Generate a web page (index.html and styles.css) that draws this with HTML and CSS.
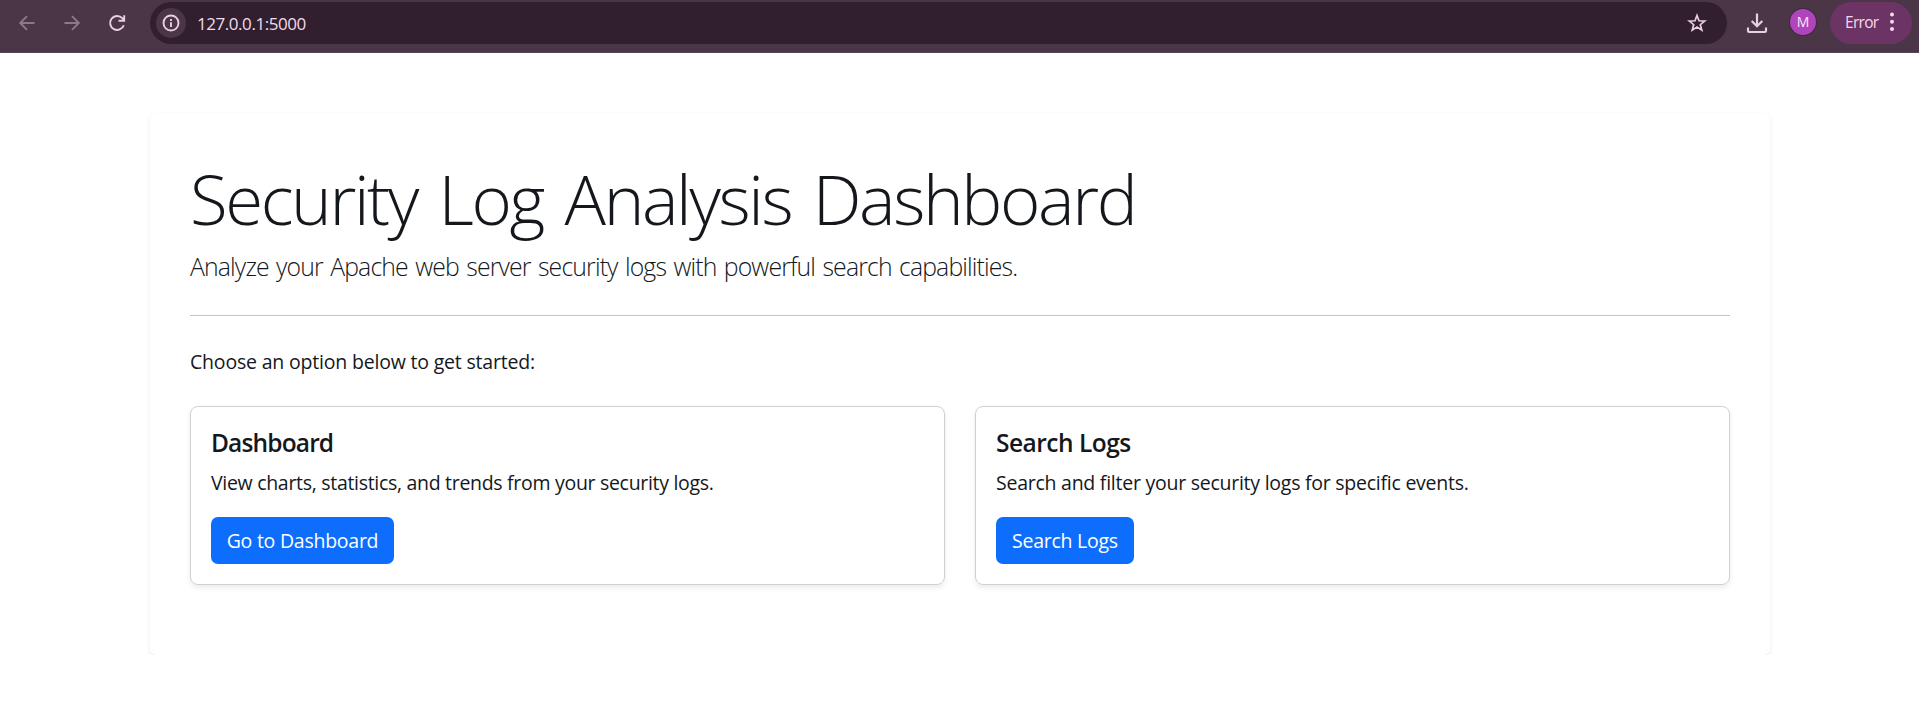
FILE: index.html
```html
<!DOCTYPE html>
<html lang="en">
<head>
<meta charset="utf-8">
<title>Security Log Analysis Dashboard</title>
<link rel="stylesheet" href="styles.css">
</head>
<body>
<header class="toolbar">
  <nav class="nav">
    <svg class="icon dim" viewBox="0 0 20 20"><path d="M17.5 10H3.5M10 3.2L3.2 10l6.800 6.800"/></svg>
    <svg class="icon dim" viewBox="0 0 20 20"><path d="M2.500 10h14M10 3.200l6.800 6.800-6.800 6.800"/></svg>
    <svg class="icon" viewBox="0 0 20 20"><path d="M16.800 12.200a7 7 0 1 1-1.500-7l1.700 2M17.200 2.300v5.500h-5.700"/></svg>
  </nav>
  <div class="address">
    <span class="site-info"><svg viewBox="0 0 20 20"><circle cx="10" cy="10" r="7.500"/><path d="M10 9.300v4.700M10 5.900v2"/></svg></span>
    <span class="url">127.0.0.1:5000</span>
    <svg class="star" viewBox="0 0 20 20"><path d="M10 2.500l2 5.300 5.700.3-4.400 3.600 1.500 5.500-4.800-3.100-4.800 3.100 1.500-5.500-4.400-3.600 5.700-.3z"/></svg>
  </div>
  <svg class="download" viewBox="0 0 22 22"><path d="M11 1.500v12.500M5.700 9l5.300 5.300 5.300-5.300M2 15.500v3.300q0 1.200 1.200 1.200h15.600q1.200 0 1.200-1.200v-3.300"/></svg>
  <span class="avatar">M</span>
  <div class="error"><span class="error-text">Error</span><svg class="dots" viewBox="0 0 4 20"><circle cx="2" cy="2.500" r="2"/><circle cx="2" cy="9.700" r="2"/><circle cx="2" cy="16.900" r="2"/></svg></div>
</header>
<main class="panel">
  <h1 class="title">Security Log Analysis Dashboard</h1>
  <p class="lead">Analyze your Apache web server security logs with powerful search capabilities.</p>
  <hr class="rule">
  <p class="prompt">Choose an option below to get started:</p>
  <div class="cards">
    <section class="card">
      <h2 class="card-title">Dashboard</h2>
      <p class="card-text">View charts, statistics, and trends from your security logs.</p>
      <a class="button button-dashboard">Go to Dashboard</a>
    </section>
    <section class="card">
      <h2 class="card-title card-title-search">Search Logs</h2>
      <p class="card-text card-text-search">Search and filter your security logs for specific events.</p>
      <a class="button button-search">Search Logs</a>
    </section>
  </div>
</main>
</body>
</html>
```

FILE: styles.css
```css
* { box-sizing: border-box; }
body { margin: 0; background: #fff; color: #14181c; font-family: "Open Sans", "Noto Sans", sans-serif; }
svg { flex: none; fill: none; stroke: #e8cfe2; stroke-width: 1.9; }

.toolbar { display: flex; height: 53px; padding: 2px 7px 9px 0; background: #4a3646; border-bottom: 1px solid #5b4657; }
.nav { display: flex; gap: 25px; width: 150px; padding: 11px 0 0 17px; }
.icon { width: 20px; height: 20px; }
.dim { stroke: #8f778a; }
.address { display: flex; align-items: center; width: 1577px; height: 42px; padding: 0 20px 0 6px; border-radius: 21px; background: #321f2e; }
.site-info { display: flex; align-items: center; justify-content: center; width: 30px; height: 30px; border-radius: 50%; background: #4a3646; }
.site-info svg { width: 20px; height: 20px; }
.url { flex: 1; padding-left: 11px; color: #f0dcec; font-size: 17px; letter-spacing: -0.45px; }
.star { width: 20px; height: 20px; stroke-width: 1.700; }
.download { width: 22px; height: 22px; margin: 10px 0 0 19px; stroke-width: 2.200; }
.avatar { width: 26px; height: 26px; margin: 7px 0 0 22px; border-radius: 50%; background: #b044bd; box-shadow: 0 0 0 1px #3d2b39; color: #f8e8f8; font-size: 14px; line-height: 26px; text-align: center; }
.error { display: flex; align-items: center; width: 82px; height: 42px; margin-left: 14px; padding: 0 0 2px 15px; border-radius: 21px; background: #6c3365; }
.error-text { width: 45px; color: #f5d8ee; font-size: 15.500px; letter-spacing: -.7px; }
.dots { width: 4px; height: 20px; fill: #f5d8ee; stroke: none; }

.panel { width: 1620px; height: 542px; margin: 60px auto 0 150px; padding: 40px; border-radius: 7px; box-shadow: 0 2px 5px rgba(0, 0, 0, .08); }
.title { margin: 0; padding-top: 3px; height: 84px; font-size: 69px; font-weight: 300; line-height: 84px; letter-spacing: -2.4px; word-spacing: 6px; white-space: nowrap; }
.lead { margin: 10px 0 0; font-size: 24.800px; font-weight: 300; line-height: 38px; letter-spacing: -.85px; word-spacing: 1.700px; white-space: nowrap; }
.rule { height: 1px; margin: 30px 0; border: 0; background: #c4c5c6; }
.prompt { height: 30px; margin: 0; padding-top: 1px; font-size: 19.500px; line-height: 30px; letter-spacing: -.19px; white-space: nowrap; }
.cards { display: grid; grid-template-columns: 1fr 1fr; gap: 30px; margin-top: 30px; }
.card { height: 179px; padding: 21px 20px 19px; border: 1px solid #cfd0d1; border-radius: 8px; box-shadow: 0 2.5px 5px rgba(0, 0, 0, .075); }
.card-title { margin: 0 0 10px; font-size: 24.500px; font-weight: 600; line-height: 30px; letter-spacing: -.85px; }
.card-title-search { letter-spacing: -.5px; }
.card-text { margin: 0 0 19px; font-size: 19.500px; line-height: 30px; letter-spacing: -.3px; white-space: nowrap; }
.card-text-search { letter-spacing: -.25px; }
.button { display: flex; align-items: center; justify-content: center; height: 47px; border-radius: 7px; background: #0d6efd; color: #fff; font-size: 19.500px; letter-spacing: -.25px; white-space: nowrap; }
.button-dashboard { width: 183px; }
.button-search { width: 138px; }
```
